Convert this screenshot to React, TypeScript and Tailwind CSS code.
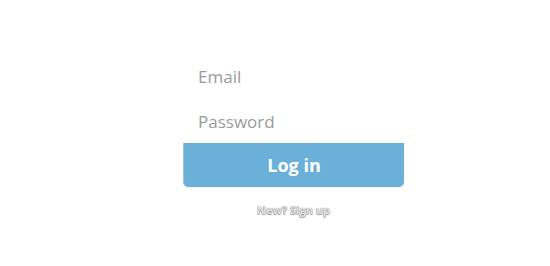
import React from 'react';

const App = () => {
  return (
    <div className="min-h-screen bg-white" style={{ fontFamily: '"Open Sans", sans-serif' }}>
      <div className="pt-[53px] pl-[183px]">
        <form className="w-[221px]" onSubmit={(e) => e.preventDefault()}>
          <input
            type="email"
            placeholder="Email"
            className="block w-full h-[46px] px-[15px] text-[17px] text-gray-700 placeholder:text-[#9a9a9a] bg-white outline-none"
          />
          <input
            type="password"
            placeholder="Password"
            className="block w-full h-[44px] px-[15px] text-[17px] text-gray-700 placeholder:text-[#9a9a9a] bg-white outline-none"
          />
          <button
            type="submit"
            className="block w-full h-[44px] bg-[#6bb0d9] text-white text-[18px] font-bold rounded-b-[5px] border-l border-[#9cc6e0]"
          >
            Log in
          </button>
        </form>
        <p className="w-[221px] mt-[15px] text-center text-[11px] font-bold text-[#e4e4e4] [text-shadow:0_0_1px_#777,0_1px_1px_#999]">
          New? Sign up
        </p>
      </div>
    </div>
  );
};

export default App;
